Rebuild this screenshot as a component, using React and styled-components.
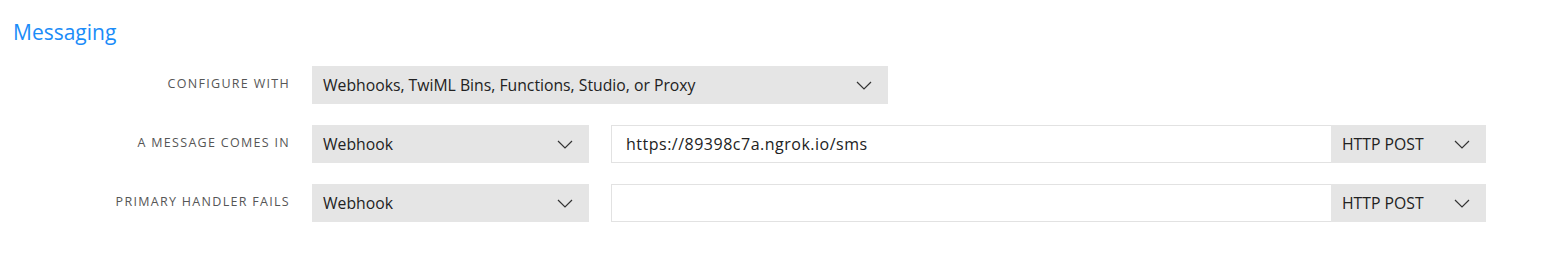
import React from "react";
import styled, { createGlobalStyle } from "styled-components";

const Global = createGlobalStyle`
  html, body { margin: 0; padding: 0; background: #fff; }
  body { font-family: "Open Sans", Lato, sans-serif; }
`;

const Page = styled.div`
  width: 1563px;
  height: 271px;
  padding: 18px 0 0 13px;
  box-sizing: border-box;
`;

const Title = styled.h2`
  margin: 0 0 20px 0;
  font-family: "Open Sans", sans-serif;
  font-weight: 400;
  font-size: 21px;
  line-height: 28px;
  color: #1b8cf8;
`;

const Rows = styled.div`
  display: flex;
  flex-direction: column;
  gap: 21px;
`;

const Row = styled.div`
  display: flex;
  align-items: center;
  height: 38px;
`;

const Label = styled.div`
  width: 277px;
  margin-right: 22px;
  text-align: right;
  text-transform: uppercase;
  font-size: 12.5px;
  letter-spacing: 1.3px;
  color: #565656;
  align-self: flex-start;
  padding-top: 9px;
`;

const Select = styled.div`
  display: flex;
  align-items: center;
  justify-content: space-between;
  width: ${(p) => p.$w}px;
  height: 38px;
  box-sizing: border-box;
  padding: 0 16px 0 11px;
  background: #e5e5e5;
  color: #222;
  font-size: 15.75px;
  flex-shrink: 0;
`;

const Group = styled.div`
  display: flex;
  margin-left: 22px;
`;

const Input = styled.div`
  width: 720px;
  height: 38px;
  box-sizing: border-box;
  border: 1px solid #e2e2e2;
  border-right: none;
  background: #fff;
  padding: 0 14px;
  display: flex;
  align-items: center;
  font-size: 16px;
  letter-spacing: 0.5px;
  color: #222;
`;

const Chevron = () => (
  <svg width="16" height="9" viewBox="0 0 16 9" fill="none">
    <path d="M1 1l7 7 7-7" stroke="#333" strokeWidth="1.2" />
  </svg>
);

const Method = () => (
  <Select $w={155}>
    HTTP POST
    <Chevron />
  </Select>
);

export default function App() {
  return (
    <>
      <Global />
      <Page>
        <Title>Messaging</Title>
        <Rows>
          <Row>
            <Label>Configure with</Label>
            <Select $w={576}>
              Webhooks, TwiML Bins, Functions, Studio, or Proxy
              <Chevron />
            </Select>
          </Row>
          <Row>
            <Label>A message comes in</Label>
            <Select $w={277}>
              Webhook
              <Chevron />
            </Select>
            <Group>
              <Input>https://89398c7a.ngrok.io/sms</Input>
              <Method />
            </Group>
          </Row>
          <Row>
            <Label>Primary handler fails</Label>
            <Select $w={277}>
              Webhook
              <Chevron />
            </Select>
            <Group>
              <Input />
              <Method />
            </Group>
          </Row>
        </Rows>
      </Page>
    </>
  );
}
